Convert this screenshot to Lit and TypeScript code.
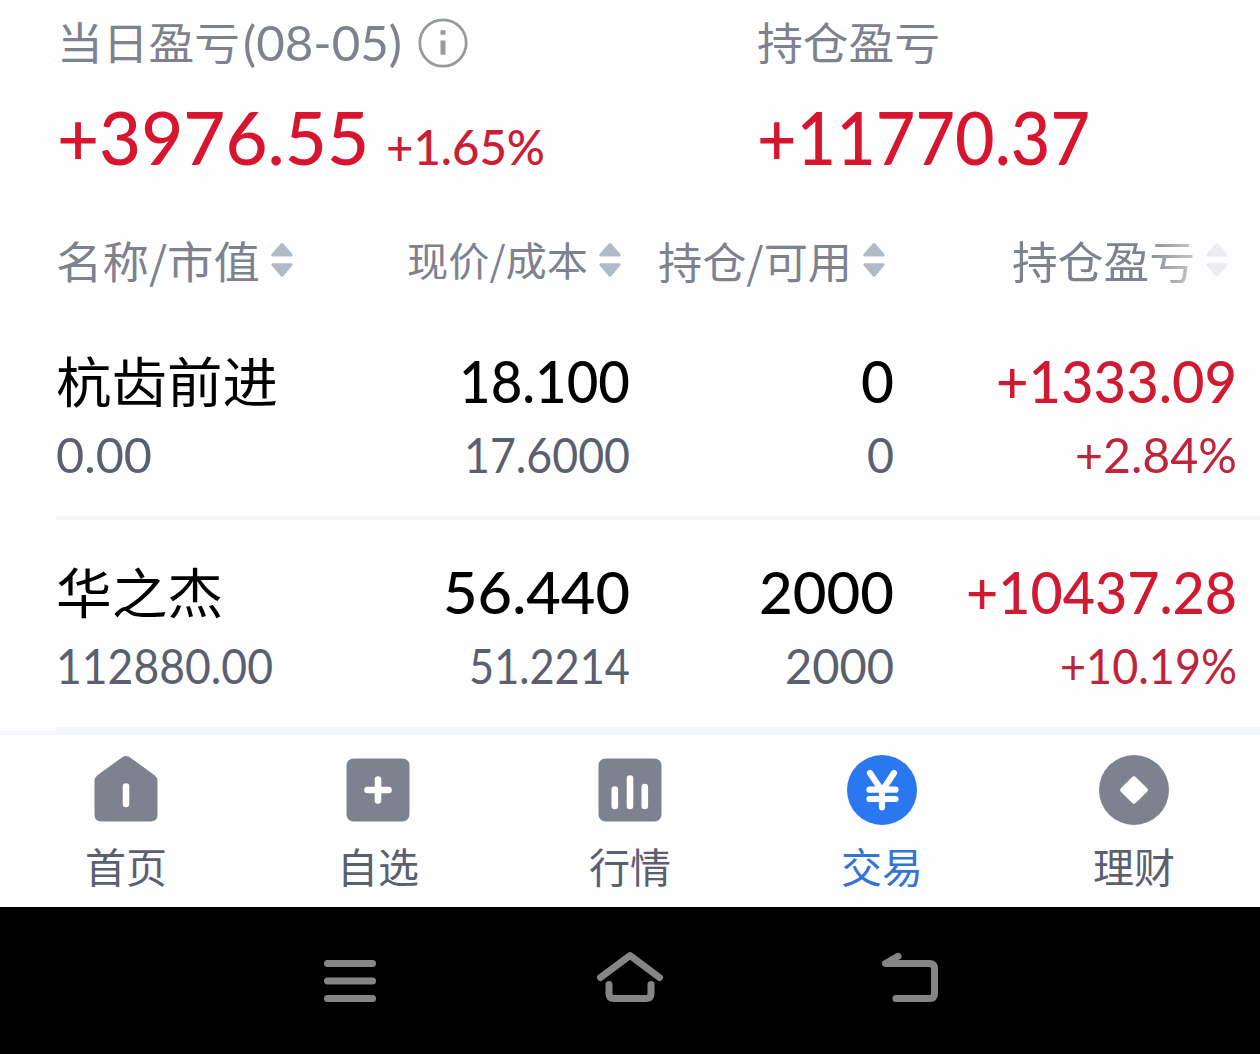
import { html, css, svg, LitElement } from 'lit';
import { customElement, property } from 'lit/decorators.js';

const COLUMNS = [
  { label: '名称/市值', width: 204, size: 44 },
  { label: '现价/成本', width: 181, size: 40 },
  { label: '持仓/可用', width: 194, size: 43 },
  { label: '持仓盈亏', width: 183, size: 44 },
];

const HOLDINGS = [
  [
    { main: '杭齿前进', sub: '0.00', mainWidth: 222, subWidth: 96, size: 54 },
    { main: '18.100', sub: '17.6000', mainWidth: 171, subWidth: 166 },
    { main: '0', sub: '0', mainWidth: 33, subWidth: 27 },
    { main: '+1333.09', sub: '+2.84%', mainWidth: 241, subWidth: 162 },
  ],
  [
    { main: '华之杰', sub: '112880.00', mainWidth: 167, subWidth: 217, size: 54 },
    { main: '56.440', sub: '51.2214', mainWidth: 187, subWidth: 161 },
    { main: '2000', sub: '2000', mainWidth: 135, subWidth: 109 },
    { main: '+10437.28', sub: '+10.19%', mainWidth: 271, subWidth: 177 },
  ],
];

const TABS = [
  {
    label: '首页',
    icon: svg`
      <path d="M32.3 3.2Q36 0.6 39.7 3.2L64.6 21.2Q67.5 23.4 67.5 27V60.5Q67.5 67.5 60.5 67.5H11.5Q4.5 67.5 4.5 60.5V27Q4.5 23.4 7.4 21.2Z" fill="currentColor" />
      <path d="M36 32.5V50" class="line" />`,
  },
  {
    label: '自选',
    icon: svg`
      <rect x="4.5" y="4.5" width="63" height="63" rx="7" fill="currentColor" />
      <path d="M36 25.5V46.5M25.5 36H46.5" class="line" />`,
  },
  {
    label: '行情',
    icon: svg`
      <rect x="4.5" y="4.5" width="63" height="63" rx="7" fill="currentColor" />
      <path d="M20.8 35.5V52M36 24.5V52M50.8 33V52" class="line" />`,
  },
  {
    label: '交易',
    active: true,
    icon: svg`
      <circle cx="36" cy="36" r="35" fill="currentColor" />
      <path d="M24 19L36 37L48 19M36 36V53.3M23.5 35.7H49.5M23.5 45H49.5" class="line line_thin" />`,
  },
  {
    label: '理财',
    icon: svg`
      <circle cx="36" cy="36" r="35" fill="currentColor" />
      <rect x="25.5" y="25.5" width="21" height="21" rx="2.8" fill="#fff" transform="rotate(45 36 36)" />`,
  },
];

// One line of text, set to an exact width.
@customElement('fit-text')
class FitText extends LitElement {
  @property() text = '';
  @property({ type: Number }) width = 0;
  @property({ type: Number }) size = 44;
  @property({ type: Number }) baseline = 0;

  static styles = css`
    :host {
      display: block;
      flex: none;
    }

    svg {
      display: block;
      height: 100%;
      overflow: visible;
    }

    text {
      fill: currentColor;
      font-kerning: none;
    }
  `;

  render() {
    return html`
      <svg width="${this.width}">
        <text
          y="${this.baseline}"
          font-size="${this.size}"
          textLength="${this.width}"
          lengthAdjust="spacingAndGlyphs"
        >${this.text}</text>
      </svg>
    `;
  }
}

@customElement('app-root')
class AppRoot extends LitElement {
  static styles = css`
    :host {
      display: flex;
      flex-direction: column;
      width: 1260px;
      height: 1054px;
      overflow: hidden;
      background: #fefefe;
      font-family: Lato, 'Noto Sans CJK SC', sans-serif;
      color: #7e828e;
    }

    .summary {
      display: grid;
      grid-template-columns: 700px 1fr;
      height: 220px;
      padding-left: 57px;
      box-sizing: border-box;
    }

    .summary__label {
      display: flex;
      height: 88px;
      gap: 3px;
    }

    .summary__value {
      display: flex;
      height: 100px;
      gap: 17px;
      color: #d8152f;
    }

    .summary__total {
      font-weight: 500;
    }

    .summary__percent {
      font-weight: 500;
      color: #c92036;
    }

    .info {
      margin: 17px 0 0 12px;
    }

    .columns,
    .holding {
      display: grid;
      grid-template-columns: 274px 300px 264px 343px;
      padding-left: 56px;
    }

    .columns {
      height: 89px;
      font-family: 'Noto Sans CJK SC', sans-serif;
    }

    .column {
      display: flex;
      gap: 11px;
      padding-right: 9px;
      justify-content: flex-end;
    }

    .column:first-child {
      justify-content: flex-start;
    }

    .column:last-child {
      mask-image: linear-gradient(90deg, #000 72%, rgba(0, 0, 0, 0.25) 93%);
    }

    .sort {
      margin-top: 22px;
      color: #b3bac7;
    }

    .holding {
      height: 207px;
    }

    .divider {
      height: 4px;
      margin-left: 56px;
      background: #f4f5f9;
    }

    .cell {
      display: flex;
      flex-direction: column;
      align-items: flex-end;
      color: #5b6070;
    }

    .cell:first-child {
      align-items: flex-start;
    }

    .cell__main {
      height: 110px;
      color: #000;
      font-weight: 500;
    }

    .cell:first-child .cell__main {
      font-weight: 400;
    }

    .cell__sub {
      height: 90px;
    }

    .cell:last-child .cell__main {
      color: #d01a32;
    }

    .cell:last-child .cell__sub {
      color: #bd263a;
    }

    .tabs {
      display: grid;
      grid-template-columns: repeat(5, 1fr);
      height: 172px;
      border-top: 4px solid #f4f5f9;
    }

    .tab {
      display: flex;
      flex-direction: column;
      align-items: center;
      padding-top: 19px;
      color: #7e828f;
    }

    .tab_active {
      color: #2b77f0;
    }

    .tab__label {
      height: 60px;
      color: #5b6070;
    }

    .tab_active .tab__label {
      color: #3474d4;
    }

    .line {
      fill: none;
      stroke: #fff;
      stroke-width: 6.6;
      stroke-linecap: round;
      stroke-linejoin: round;
    }

    .line_thin {
      stroke-width: 6.2;
    }

    .system {
      display: flex;
      justify-content: space-between;
      align-items: flex-start;
      flex: 1;
      padding: 39px 315px 0;
      background: #000;
    }

    .system path {
      fill: none;
      stroke: #858585;
      stroke-width: 7;
      stroke-linecap: round;
      stroke-linejoin: round;
    }
  `;

  renderSort() {
    return html`
      <svg class="sort" width="22" height="36" viewBox="0 0 22 36" fill="currentColor">
        <path d="M9.8 1.4Q11 0.4 12.2 1.4L21.3 12Q22.3 14.4 20 14.4H2Q-0.3 14.4 0.7 12Z" />
        <path d="M9.8 34.2Q11 35.2 12.2 34.2L21.3 23.6Q22.3 21.2 20 21.2H2Q-0.3 21.2 0.7 23.6Z" />
      </svg>
    `;
  }

  renderSummary() {
    return html`
      <div class="summary">
        <div>
          <div class="summary__label">
            <fit-text text="当日盈亏" width="183" size="44" baseline="60"></fit-text>
            <fit-text text="(08-05)" width="159" size="48" baseline="61"></fit-text>
            <svg class="info" width="52" height="52" viewBox="0 0 52 52">
              <circle cx="26" cy="26" r="23.2" fill="none" stroke="#979b9b" stroke-width="2.8" />
              <path d="M23.5 13.2h5v4.6h-5zM23.5 23.5h5v14.3h-5z" fill="#979b9b" />
            </svg>
          </div>
          <div class="summary__value">
            <fit-text class="summary__total" text="+3976.55" width="312" size="73" baseline="77"></fit-text>
            <fit-text class="summary__percent" text="+1.65%" width="159" size="48" baseline="77"></fit-text>
          </div>
        </div>
        <div>
          <div class="summary__label">
            <fit-text text="持仓盈亏" width="183" size="44" baseline="60"></fit-text>
          </div>
          <div class="summary__value">
            <fit-text class="summary__total" text="+11770.37" width="333" size="73" baseline="77"></fit-text>
          </div>
        </div>
      </div>
    `;
  }

  renderCell(cell) {
    return html`
      <div class="cell">
        <fit-text class="cell__main" text="${cell.main}" width="${cell.mainWidth}" size="${cell.size ?? 58}" baseline="${cell.size ? 93.5 : 94}"></fit-text>
        <fit-text class="cell__sub" text="${cell.sub}" width="${cell.subWidth}" size="48" baseline="54"></fit-text>
      </div>
    `;
  }

  render() {
    return html`
      ${this.renderSummary()}
      <div class="columns">
        ${COLUMNS.map(
          (column) => html`
            <div class="column">
              <fit-text text="${column.label}" width="${column.width}" size="${column.size}" baseline="${column.size === 40 ? 56 : 59}"></fit-text>
              ${this.renderSort()}
            </div>
          `
        )}
      </div>
      ${HOLDINGS.map(
        (holding) => html`
          <div class="holding">${holding.map((cell) => this.renderCell(cell))}</div>
          <div class="divider"></div>
        `
      )}
      <div class="tabs">
        ${TABS.map(
          (tab) => html`
            <div class="tab ${tab.active ? 'tab_active' : ''}">
              <svg width="72" height="72" viewBox="0 0 72 72">${tab.icon}</svg>
              <fit-text class="tab__label" text="${tab.label}" width="82" size="41" baseline="56.5"></fit-text>
            </div>
          `
        )}
      </div>
      <div class="system">
        <svg width="70" height="70" viewBox="0 0 70 70">
          <path d="M12.5 17.5H57.5M12.5 35H57.5M12.5 52.5H57.5" />
        </svg>
        <svg width="70" height="70" viewBox="0 0 70 70">
          <path d="M5.5 31.5L35 9.5L64.5 31.5M14 38.5V47.5Q14 52.5 19 52.5H51Q56 52.5 56 47.5V38.5" />
        </svg>
        <svg width="70" height="70" viewBox="0 0 70 70">
          <path d="M23 10.3L10.5 17.5H54.5Q59.5 17.5 59.5 22.5V47.5Q59.5 52.5 54.5 52.5H21" />
        </svg>
      </div>
    `;
  }
}
